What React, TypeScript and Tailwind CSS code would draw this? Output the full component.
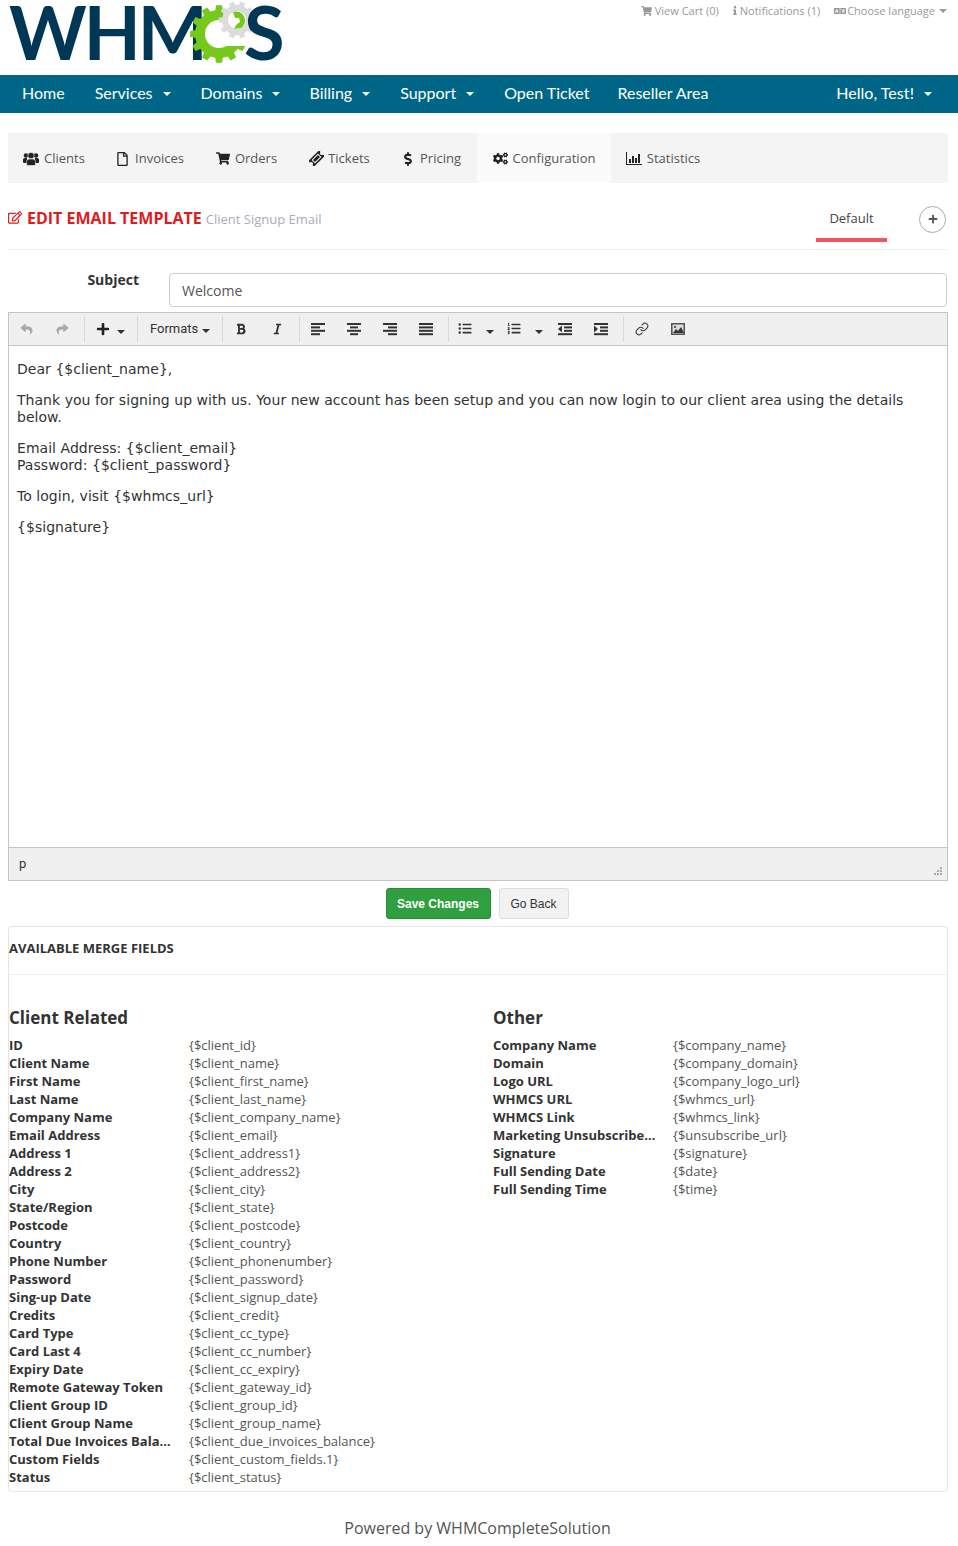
import { FaRegFile, FaShoppingCart, FaDollarSign, FaCogs, FaRegEdit, FaInfo, FaLanguage, FaPlus, FaBold, FaItalic, FaReply, FaShare, FaListUl, FaListOl } from 'react-icons/fa';
import { Link } from 'lucide-react';

const gearPath = (cx: number, cy: number, outer: number, root: number, teeth: number) => {
    const pts: string[] = [];
    const step = (Math.PI * 2) / teeth;
    for (let i = 0; i < teeth; i++) {
        const a = i * step;
        const p = (r: number, t: number) => `${(cx + r * Math.cos(a + t * step)).toFixed(2)} ${(cy + r * Math.sin(a + t * step)).toFixed(2)}`;
        pts.push(p(root, -0.3), p(outer, -0.2), p(outer, 0.2), p(root, 0.3));
    }
    return `M${pts.join('L')}Z`;
};

const Logo = () => (
    <div className="relative w-[290px] h-[75px]">
        <span className="absolute left-[9px] top-0 font-['Lato',sans-serif] font-bold text-[74px] leading-[64px] tracking-[-3px] text-[#003755]">WHM</span>
        <svg className="absolute left-[185px] top-0" width="80" height="66" viewBox="185 0 80 66">
            <path d={gearPath(219, 34, 29, 24, 12)} fill="#76c81a" />
            <circle cx="219" cy="34" r="14" fill="#fff" />
            <path d="M222 27h30v19h-30z" fill="#fff" />
            <path d={gearPath(237, 20, 18.5, 15, 10)} fill="#dcdcdc" />
            <circle cx="237" cy="20" r="9" fill="#fff" />
            <path d="M233 12a9 9 0 0 1 8 16l-7 1 3-5 3-2-1-4-4 0z" fill="#76c81a" />
        </svg>
        <span className="absolute left-[244px] top-0 font-['Lato',sans-serif] font-bold text-[74px] leading-[64px] text-[#003755]">S</span>
    </div>
);

const TopLink = ({ icon, label, caret }: { icon: React.ReactNode; label: string; caret?: boolean }) => (
    <span className="flex items-center gap-[3px]">
        {icon}
        {label}
        {caret && <span className="ml-[1px] w-0 h-0 border-x-4 border-x-transparent border-t-4 border-t-[#999]" />}
    </span>
);

const NavItem = ({ label, caret, className = '' }: { label: string; caret?: boolean; className?: string }) => (
    <a className={`flex items-center px-[15px] pb-[2px] ${className}`}>
        {label}
        {caret && <span className="ml-[10px] mt-[2px] w-0 h-0 border-x-4 border-x-transparent border-t-4 border-t-white" />}
    </a>
);

const UsersIcon = () => (
    <svg width="16" height="14" viewBox="0 0 16 14" fill="currentColor">
        <circle cx="3" cy="3.5" r="2.3" />
        <circle cx="13" cy="3.5" r="2.3" />
        <path d="M0 7.5Q0 6 2 6h2v5H1Q0 11 0 10zM16 7.5Q16 6 14 6h-2v5h3q1 0 1-1z" />
        <circle cx="8" cy="3.6" r="3.2" fill="currentColor" stroke="#f4f4f4" strokeWidth=".6" />
        <path d="M3.6 9.5Q3.6 7 6 7h4q2.4 0 2.4 2.5v2.7q0 1.3-1.4 1.3H5q-1.4 0-1.4-1.3z" stroke="#f4f4f4" strokeWidth=".6" />
    </svg>
);

const TicketIcon = () => (
    <svg width="15" height="15" viewBox="0 0 15 15">
        <g transform="rotate(-45 7.5 7.5)">
            <path d="M0 3.5h15v2.2a1.8 1.8 0 0 0 0 3.6v2.2H0V9.300a1.800 1.800 0 0 0 0-3.600z" fill="#222" />
            <path d="M3 5h9v5H3z" fill="#f4f4f4" />
            <path d="M4 6h7v3H4z" fill="#222" />
        </g>
    </svg>
);

const tabs = [
    { label: 'Clients', icon: <UsersIcon />, w: 'w-[92px]', gap: 'gap-[5px]' },
    { label: 'Invoices', icon: <FaRegFile className="w-[13px] h-[14px]" />, w: 'w-[100px]', gap: 'gap-[6px]' },
    { label: 'Orders', icon: <FaShoppingCart className="w-[14px] h-[13px]" />, w: 'w-[93px]', gap: 'gap-[5px]' },
    { label: 'Tickets', icon: <TicketIcon />, w: 'w-[93px]', gap: 'gap-[4px]' },
    { label: 'Pricing', icon: <FaDollarSign className="w-[10px] h-[14px]" />, w: 'w-[92px]', gap: 'gap-[7px]' },
];

const Lines = ({ kind }: { kind: 'left' | 'center' | 'right' | 'justify' | 'outdent' | 'indent' }) => {
    const rows: [number, number][] =
        kind === 'left' ? [[1, 14], [1, 9], [1, 14], [1, 9]]
        : kind === 'center' ? [[1, 14], [4, 8], [1, 14], [4, 8]]
        : kind === 'right' ? [[1, 14], [6, 9], [1, 14], [6, 9]]
        : kind === 'justify' ? [[1, 14], [1, 14], [1, 14], [1, 14]]
        : [[1, 14], [7, 8], [7, 8], [1, 14]];
    return (
        <svg width="16" height="14" viewBox="0 0 16 14" fill="#333">
            {rows.map(([x, w], i) => <rect key={i} x={x} y={1 + i * 3.4} width={w} height="2" />)}
            {kind === 'outdent' && <path d="M5 3.5v7L1 7z" />}
            {kind === 'indent' && <path d="M1 3.5v7L5 7z" />}
        </svg>
    );
};

const Btn = ({ children, className = 'w-9' }: { children: React.ReactNode; className?: string }) => (
    <div className={`${className} h-[32px] pb-[1px] flex items-center justify-center text-[#333]`}>{children}</div>
);

const Caret = ({ className = '' }: { className?: string }) => (
    <span className={`w-0 h-0 border-x-4 border-x-transparent border-t-4 border-t-[#333] ${className}`} />
);

const Sep = () => <div className="w-px h-[26px] ml-[4px] bg-[#d9d9d9]" />;

const Toolbar = () => (
    <div className="h-[33px] flex items-center bg-[#f0f0f0] border-b border-[#c5c5c5] font-['Roboto',sans-serif]">
        <Btn className="w-9 ml-[-1px]"><FaReply className="w-[13px] h-[12px] text-[#aaa]" /></Btn>
        <Btn><FaShare className="w-[13px] h-[12px] text-[#aaa]" /></Btn>
        <Sep />
        <Btn className="w-[48px] justify-start pl-[11px] gap-[7px]"><FaPlus className="w-[14px] h-[14px] text-[#222]" /><Caret className="mt-[6px]" /></Btn>
        <Sep />
        <Btn className="w-[80px] justify-start pl-[12px] gap-[4px] text-[13px] text-[#333]">Formats<Caret className="mt-[4px]" /></Btn>
        <Sep />
        <Btn><FaBold className="w-[10px] h-[12px]" /></Btn>
        <Btn><FaItalic className="w-[9px] h-[12px]" /></Btn>
        <Sep />
        <Btn><Lines kind="left" /></Btn>
        <Btn><Lines kind="center" /></Btn>
        <Btn><Lines kind="right" /></Btn>
        <Btn><Lines kind="justify" /></Btn>
        <Sep />
        <Btn className="w-[49px] justify-start pl-[9px] gap-[14px]"><FaListUl className="w-[14px] h-[13px]" /><Caret className="mt-[6px]" /></Btn>
        <Btn className="w-[49px] justify-start pl-[9px] gap-[14px]"><FaListOl className="w-[14px] h-[13px]" /><Caret className="mt-[6px]" /></Btn>
        <Btn><Lines kind="outdent" /></Btn>
        <Btn><Lines kind="indent" /></Btn>
        <Sep />
        <Btn><Link size={14} strokeWidth={1.75} /></Btn>
        <Btn>
            <svg width="14" height="12" viewBox="0 0 14 12"><path d="M0 0h14v12H0z" fill="#555" /><path d="M1.5 1.5h11v9h-11z" fill="#ddd" /><path d="M2 10l3-4 2 2 3-4 3 6z" fill="#333" /><circle cx="4" cy="4" r="1" fill="#333" /></svg>
        </Btn>
    </div>
);

const clientFields: [string, string][] = [
    ['ID', '{$client_id}'],
    ['Client Name', '{$client_name}'],
    ['First Name', '{$client_first_name}'],
    ['Last Name', '{$client_last_name}'],
    ['Company Name', '{$client_company_name}'],
    ['Email Address', '{$client_email}'],
    ['Address 1', '{$client_address1}'],
    ['Address 2', '{$client_address2}'],
    ['City', '{$client_city}'],
    ['State/Region', '{$client_state}'],
    ['Postcode', '{$client_postcode}'],
    ['Country', '{$client_country}'],
    ['Phone Number', '{$client_phonenumber}'],
    ['Password', '{$client_password}'],
    ['Sing-up Date', '{$client_signup_date}'],
    ['Credits', '{$client_credit}'],
    ['Card Type', '{$client_cc_type}'],
    ['Card Last 4', '{$client_cc_number}'],
    ['Expiry Date', '{$client_cc_expiry}'],
    ['Remote Gateway Token', '{$client_gateway_id}'],
    ['Client Group ID', '{$client_group_id}'],
    ['Client Group Name', '{$client_group_name}'],
    ['Total Due Invoices Balance', '{$client_due_invoices_balance}'],
    ['Custom Fields', '{$client_custom_fields.1}'],
    ['Status', '{$client_status}'],
];

const otherFields: [string, string][] = [
    ['Company Name', '{$company_name}'],
    ['Domain', '{$company_domain}'],
    ['Logo URL', '{$company_logo_url}'],
    ['WHMCS URL', '{$whmcs_url}'],
    ['WHMCS Link', '{$whmcs_link}'],
    ['Marketing Unsubscribe URL', '{$unsubscribe_url}'],
    ['Signature', '{$signature}'],
    ['Full Sending Date', '{$date}'],
    ['Full Sending Time', '{$time}'],
];

const FieldColumn = ({ title, rows, className }: { title: string; rows: [string, string][]; className: string }) => (
    <div className={className}>
        <h3 className="mt-[1px] text-[17px] leading-[24px] font-bold text-[#333] mb-[6px]">{title}</h3>
        {rows.map(([name, tag]) => (
            <div key={name} className="flex h-[18px] leading-[18px] text-[13px]">
                <b className="w-[180px] pr-[16px] truncate font-bold text-[#333]">{name}</b>
                <span className="text-[#555]">{tag}</span>
            </div>
        ))}
    </div>
);

export default function App() {
    return (
        <div className="w-[958px] h-[1546px] bg-white font-['Open_Sans',sans-serif] text-[#333] text-[13px] overflow-hidden">

            {/* Header */}
            <div className="h-[75px] flex justify-between">
                <Logo />
                <div className="flex gap-[14px] pt-[3px] pr-[11px] h-fit text-[11px] leading-[15px] text-[#999]">
                    <TopLink icon={<FaShoppingCart className="w-[11px] h-[10px]" />} label="View Cart (0)" />
                    <TopLink icon={<FaInfo className="w-[4px] h-[9px]" />} label="Notifications (1)" />
                    <TopLink icon={<FaLanguage className="w-[12px] h-[12px] mr-[-2px]" />} label="Choose language" caret />
                </div>
            </div>

            {/* Main nav */}
            <div className="h-[38px] pl-[7px] pr-[11px] flex justify-between bg-[#006687] text-white text-[16px] font-['Lato',sans-serif]">
                <div className="flex">
                    <NavItem label="Home" />
                    <NavItem label="Services" caret />
                    <NavItem label="Domains" caret />
                    <NavItem label="Billing" caret className="ml-[-1px]" />
                    <NavItem label="Support" caret />
                    <NavItem label="Open Ticket" />
                    <NavItem label="Reseller Area" className="ml-[-2px]" />
                </div>
                <NavItem label="Hello, Test!" caret className="tracking-[0.05px]" />
            </div>

            {/* Section tabs */}
            <div className="mt-[20px] ml-[8px] mr-[10px] h-[50px] flex bg-[#f4f4f4] text-[#555]">
                {tabs.map((t) => (
                    <div key={t.label} className={`${t.w} ${t.gap} flex items-center justify-center pt-[1px]`}>
                        <span className="text-[#222]">{t.icon}</span>{t.label}
                    </div>
                ))}
                <div className="w-[134px] ml-[-1px] flex items-center justify-center gap-[5px] pt-[1px] bg-[#fbfbfb]">
                    <FaCogs className="w-[15px] h-[13px] text-[#222]" />Configuration
                </div>
                <div className="w-[104px] flex items-center justify-center gap-[5px] pt-[1px]">
                    <svg width="16" height="13" viewBox="0 0 16 13" fill="#222"><path d="M0 0h1v12h15v1H0z" /><path d="M3 7h2v4H3zM6 4h2v7H6zM9 6h2v5H9zM12 2h2v9h-2z" /></svg>
                    Statistics
                </div>
            </div>

            {/* Page heading */}
            <div className="ml-[8px] mr-[10px] h-[67px] flex items-center border-b border-[#eee]">
                <FaRegEdit className="w-[14px] h-[13px] mr-[5px] mt-[2px] text-[#e01b1b]" />
                <span className="text-[16px] font-bold uppercase text-[#e01b1b] mt-[4px]">Edit Email Template</span>
                <span className="ml-[4px] mt-[7px] text-[#aab]">Client Signup Email</span>
                <div className="ml-auto h-full flex items-center">
                    <div className="w-[71px] h-[47px] mt-[4px] pt-[14px] text-center border-b-4 border-[#f2545b] text-[#444]">Default</div>
                    <div className="ml-[32px] mr-[2px] mt-[6px] w-[27px] h-[27px] rounded-full border border-[#aaa] flex items-center justify-center">
                        <FaPlus className="w-[10px] h-[10px] text-[#555]" />
                    </div>
                </div>
            </div>

            {/* Subject */}
            <div className="mt-[23px] mx-[8px] flex">
                <label className="w-[131px] text-right text-[14px] font-bold leading-[14px]">Subject</label>
                <div className="ml-[30px] w-[778px] h-[34px] px-[12px] flex items-center border border-[#ccc] rounded-[4px] text-[14px] text-[#555]">Welcome</div>
            </div>

            {/* Editor */}
            <div className="mt-[5px] ml-[8px] mr-[10px] h-[569px] flex flex-col border border-[#c5c5c5]">
                <Toolbar />
                <div className="flex-1 px-[8px] pt-[15px] font-['DejaVu_Sans',sans-serif] text-[14px] leading-[17px] tracking-[0.04px] text-[#333] space-y-[14px]">
                    <p>Dear {'{$client_name}'},</p>
                    <p>Thank you for signing up with us. Your new account has been setup and you can now login to our client area using the details below.</p>
                    <p>Email Address: {'{$client_email}'}<br />Password: {'{$client_password}'}</p>
                    <p>To login, visit {'{$whmcs_url}'}</p>
                    <p>{'{$signature}'}</p>
                </div>
                <div className="relative h-[33px] px-[10px] flex items-center bg-[#f0f0f0] border-t border-[#c5c5c5] text-[13px] text-[#333] font-['Roboto',sans-serif]">
                    p
                    <svg className="absolute right-[5px] bottom-[5px]" width="8" height="8" viewBox="0 0 8 8" fill="#aaa"><path d="M6 0h2v2H6zM3 3h2v2H3zM6 3h2v2H6zM0 6h2v2H0zM3 6h2v2H3zM6 6h2v2H6z" /></svg>
                </div>
            </div>

            {/* Form actions */}
            <div className="mt-[7px] flex justify-center gap-[8px] font-['Liberation_Sans',sans-serif] text-[12px]">
                <button className="w-[105px] h-[31px] ml-[-4px] rounded-[3px] bg-[#2f9f3f] border border-[#2a8c38] text-white font-bold">Save Changes</button>
                <button className="w-[70px] h-[31px] rounded-[3px] bg-[#f2f2f2] border border-[#ddd] text-[#333]">Go Back</button>
            </div>

            {/* Merge fields */}
            <div className="mt-[7px] ml-[8px] mr-[10px] h-[566px] border border-[#e5e5e5] rounded-[4px]">
                <div className="h-[48px] pb-[4px] flex items-center border-b border-[#eee] text-[13px] font-bold uppercase text-[#333]">Available Merge Fields</div>
                <div className="flex pt-[30px]">
                    <FieldColumn title="Client Related" rows={clientFields} className="w-[484px]" />
                    <FieldColumn title="Other" rows={otherFields} className="flex-1" />
                </div>
            </div>

            <p className="mt-[25px] text-center pr-[3px] text-[16px] leading-[22px] text-[#555]">Powered by WHMCompleteSolution</p>
        </div>
    );
}
